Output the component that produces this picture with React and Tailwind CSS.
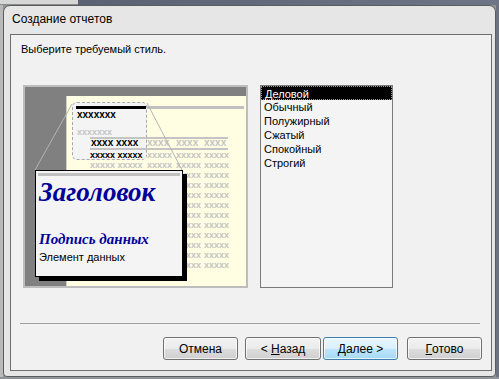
const sans = { fontFamily: '"Liberation Sans", Arial, sans-serif' };

function Xs({ left, center, text, black, big }) {
  const size = big ? 'text-[10px]' : 'text-[9px]';
  return (
    <span
      className={`absolute font-bold leading-[10px] whitespace-pre ${size} ${black ? 'text-black' : 'text-[#c4c4c4]'}`}
      style={{ left, top: center - 5, fontFamily: '"Liberation Sans", Arial, sans-serif' }}
    >
      {text}
    </span>
  );
}

function Preview() {
  const rows = [70, 80, 90, 100, 110, 120, 130, 140, 150, 160, 170, 180];
  return (
    <div className="relative w-[225px] h-[203px] bg-[#808080] shadow-[inset_0_0_0_2px_#bdbdbd] overflow-hidden">
      {/* page */}
      <div className="absolute left-[43px] top-[11px] right-[2px] bottom-[2px] bg-[#fffee2] border-l border-[#d0d0c0]" />
      <div className="absolute left-[53px] top-[21px] w-[168px] h-[3px] bg-[#c0c0c0]" />

      {/* magnified region */}
      <div className="absolute left-[49px] top-[17px] w-[75px] h-[58px] rounded-[5px] border border-dashed border-[#a8a8a8] bg-[#f4f4f4]" />
      <div className="absolute left-[53px] top-[21px] w-[70px] h-[3px] bg-black" />
      <Xs left={54} center={30} text="xxxxxxx" black big />
      <Xs left={54} center={47} text="xxxxxxx" />

      <div className="absolute left-[67px] top-[52px] w-[138px] h-[2px] bg-[#c4c4c4]" />
      <div className="absolute left-[67px] top-[63px] w-[138px] h-[2px] bg-[#c4c4c4]" />

      <Xs left={68} center={58} text="xxxx xxxx" black big />
      <Xs left={124} center={58} text="xxxx" big />
      <Xs left={153} center={58} text="xxxx" big />
      <Xs left={181} center={58} text="xxxx" big />

      {rows.map((y, i) => (
        <div key={y}>
          {i < 2 && <Xs left={67} center={y} text="xxxxx xxxxx" black={i === 0} />}
          {i < 2 && <Xs left={124} center={y} text="xxxxx" />}
          <Xs left={153} center={y} text="xxxxx" />
          <Xs left={181} center={y} text="xxxxx" />
        </div>
      ))}

      <svg className="absolute inset-0" width="225" height="203">
        <line x1="49" y1="19" x2="12" y2="85" stroke="#b4b4b4" strokeWidth="1" />
        <line x1="124" y1="18" x2="160" y2="87" stroke="#b4b4b4" strokeWidth="1" />
      </svg>

      {/* zoomed card */}
      <div className="absolute left-[12px] top-[85px] w-[148px] h-[107px] border border-black bg-[#f4f4f4] shadow-[4px_4px_0_#000] px-[2px] pt-[2px]">
        <div className="h-[3px] bg-[#c0c0c0]" />
        <div
          className="ml-[1px] mt-[1px] text-[27px] leading-[30px] font-bold italic text-[#000099]"
          style={{ fontFamily: '"Liberation Serif", "Times New Roman", serif' }}
        >
          Заголовок
        </div>
        <div
          className="ml-[1px] mt-[23px] text-[15px] leading-[18px] font-bold italic text-[#000099]"
          style={{ fontFamily: '"Liberation Serif", "Times New Roman", serif' }}
        >
          Подпись данных
        </div>
        <div className="ml-[1px] mt-[3px] text-[11px] leading-[13px] text-black" style={sans}>
          Элемент данных
        </div>
      </div>
    </div>
  );
}

function StyleList() {
  const items = ['Деловой', 'Обычный', 'Полужирный', 'Сжатый', 'Спокойный', 'Строгий'];
  return (
    <div className="w-[133px] h-[203px] border border-[#7a7a7a] bg-[#f4f4f4]" style={sans}>
      {items.map((t, i) => (
        <div
          key={t}
          className={`h-[14px] pl-[3px] text-[11px] leading-[14px] ${i === 0 ? 'bg-black text-white border border-dotted border-[#9a9a9a] pl-[2px] leading-[12px]' : 'text-black'}`}
        >
          {t}
        </div>
      ))}
    </div>
  );
}

function Button({ children, primary, w = 'w-[75px]', className = '' }) {
  return (
    <div
      className={`${w} h-[23px] rounded-[3px] border flex items-center justify-center text-[12px] text-black ${className} ${
        primary
          ? 'border-[#3c7fb1] bg-[linear-gradient(#eaf6fd_0%,#d9f0fc_50%,#bee6fd_51%,#a7d9f5_100%)]'
          : 'border-[#707070] bg-[linear-gradient(#f2f2f2_0%,#ebebeb_50%,#dddddd_51%,#cfcfcf_100%)]'
      } shadow-[inset_0_0_0_1px_rgba(255,255,255,0.7)]`}
      style={sans}
    >
      {children}
    </div>
  );
}

export default function App() {
  return (
    <div className="w-[499px] h-[379px] bg-[#8e939c] flex flex-col overflow-hidden">
      <div className="h-[5px] flex">
        <div className="w-[78px] bg-[#d6d6d6] border-b border-[#8a8a8a]" />
        <div className="flex-1 bg-[linear-gradient(90deg,#5a6172,#6e7586)]" />
      </div>
      <div className="flex">
        <div className="w-[3px] bg-[#b9b9b9]" />
        <div className="w-[493px] h-[372px] rounded-t-[7px] rounded-b-[4px] border border-[#5c5c5c] bg-[#e6e6e6] flex flex-col">
          <div className="h-[28px] pl-[8px] pt-[5px]">
            <div className="text-[12px] leading-[16px] text-black" style={sans}>
              Создание отчетов
            </div>
          </div>
          <div className="ml-[6px] mr-[3px] mb-[5px] flex-1 border border-[#6f6f6f] bg-[#f1f1f1] flex flex-col">
            <div className="ml-[10px] mt-[8px] h-[13px] text-[11px] leading-[13px] text-black" style={sans}>
              Выберите требуемый стиль.
            </div>
            <div className="mt-[29px] ml-[12px] flex gap-[12px]">
              <Preview />
              <StyleList />
            </div>
            <div className="ml-[9px] mt-[35px] w-[460px] h-[1px] bg-[#a0a0a0]" />
            <div className="mt-[13px] ml-[152px] flex">
              <Button>Отмена</Button>
              <Button w="w-[76px]" className="ml-[7px]">
                &lt;&nbsp;<span className="underline">Н</span>азад
              </Button>
              <Button primary className="ml-[2px]">
                <span className="underline">Д</span>алее &gt;
              </Button>
              <Button className="ml-[9px]">
                <span className="underline">Г</span>отово
              </Button>
            </div>
          </div>
        </div>
        <div className="flex-1 bg-[#6d7380]" />
      </div>
    </div>
  );
}
